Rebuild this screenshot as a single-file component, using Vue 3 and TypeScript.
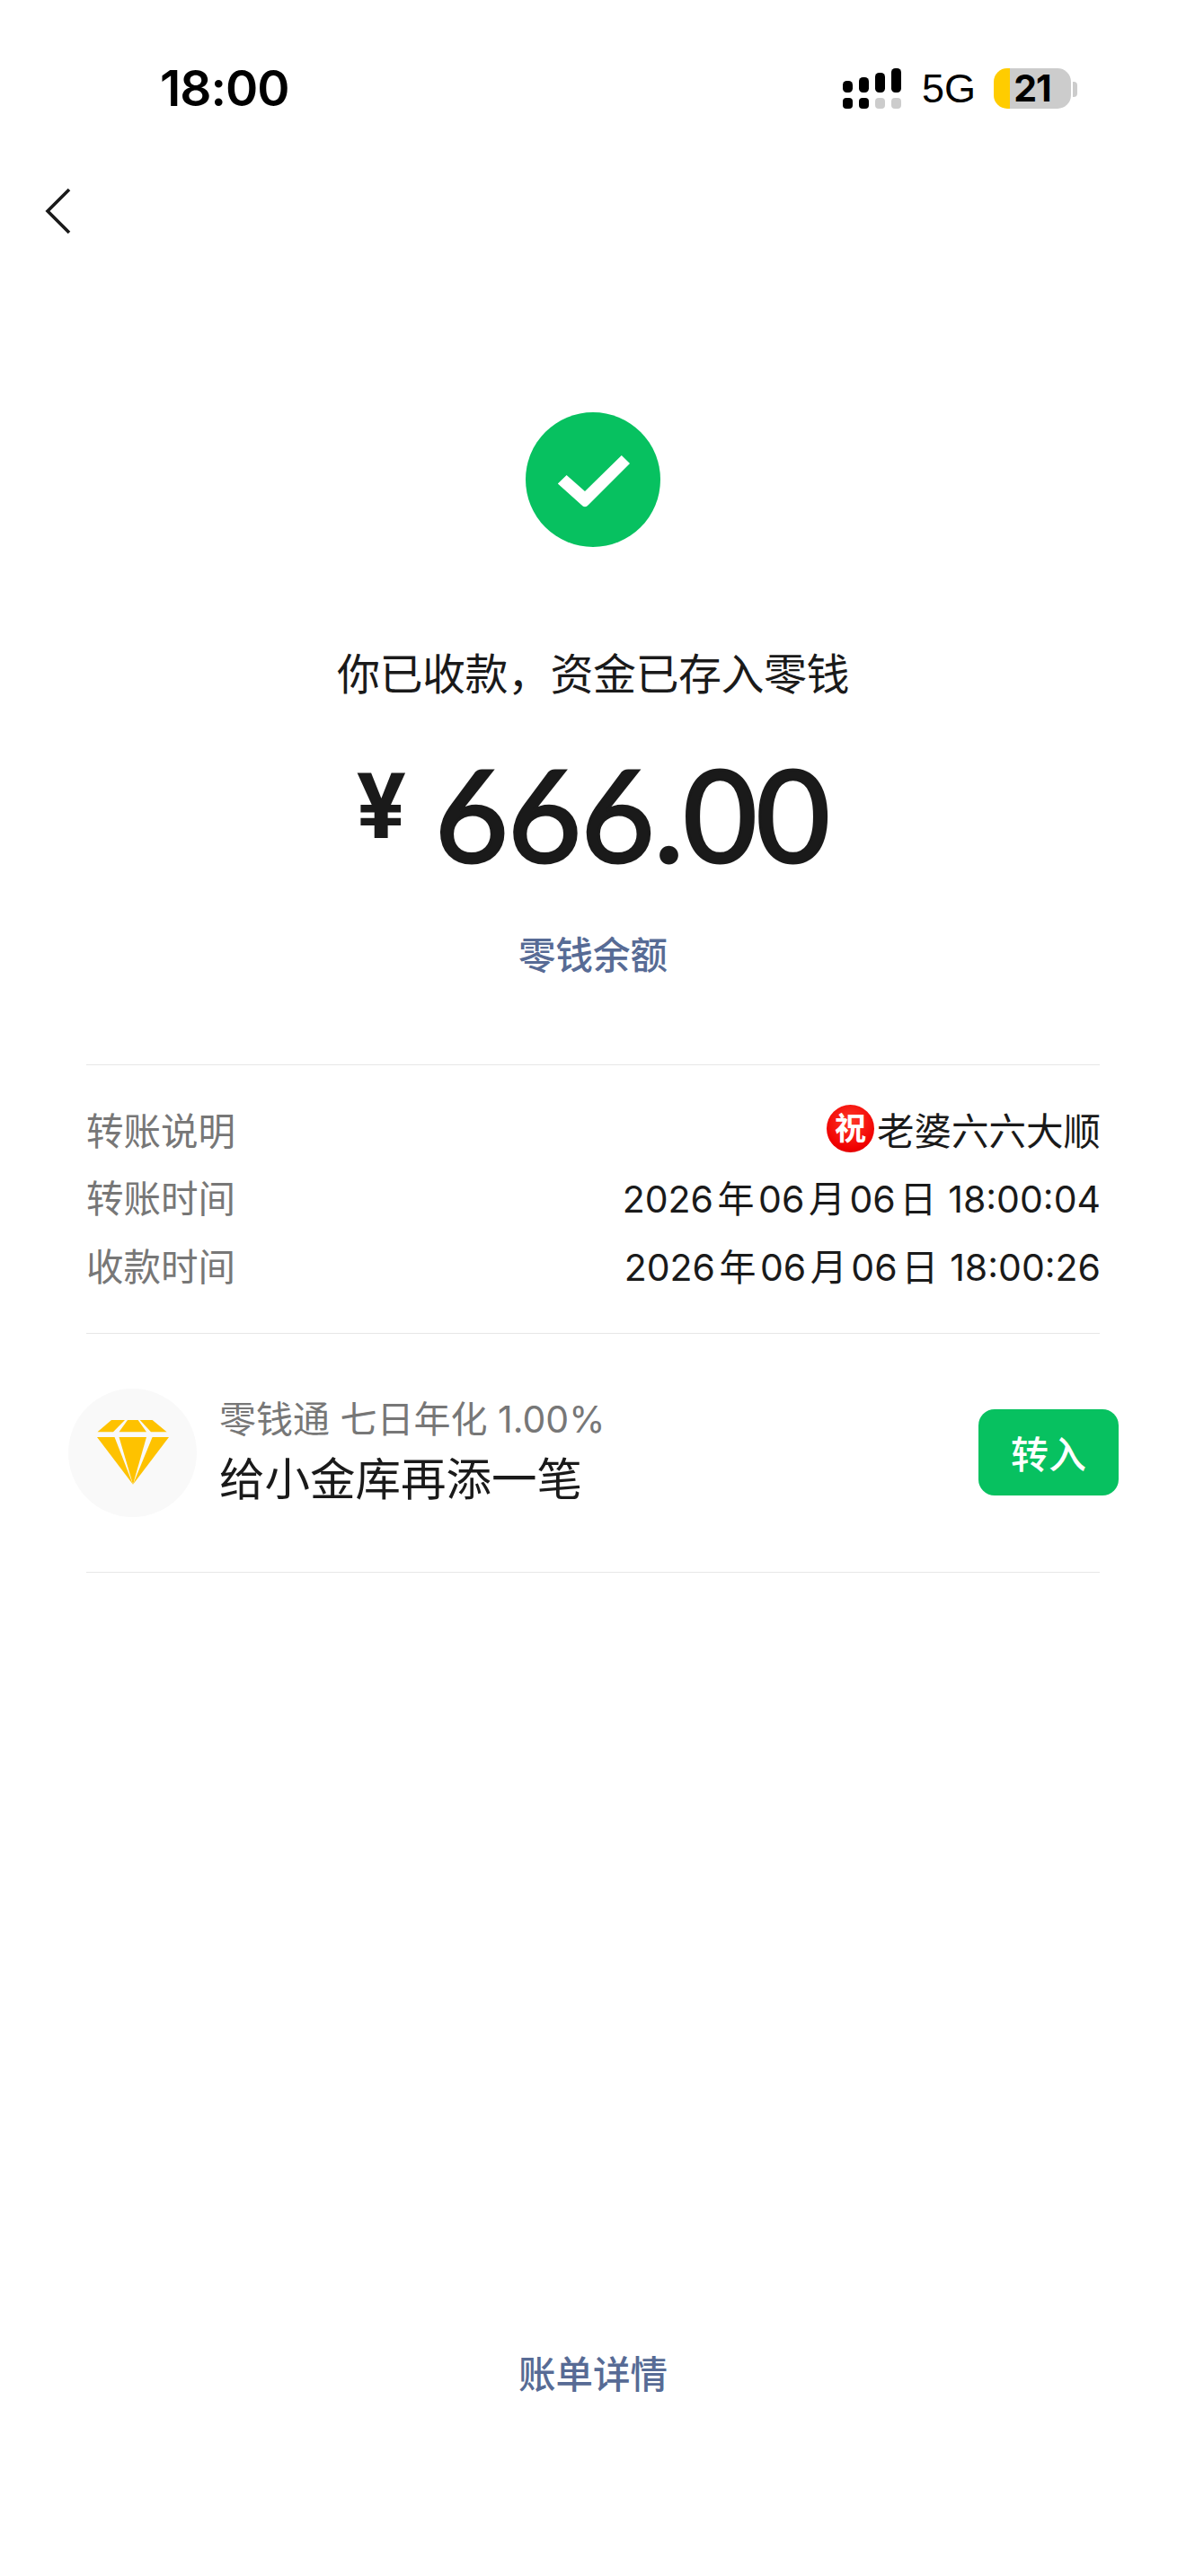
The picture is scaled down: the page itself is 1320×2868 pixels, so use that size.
<script setup lang="ts">
const infoRows = [
  { label: '转账时间', date: '2026 年 06 月 06 日', time: '18:00:04' },
  { label: '收款时间', date: '2026 年 06 月 06 日', time: '18:00:26' },
];

const signalBars = [
  { x: 0, y: 14, h: 13 },
  { x: 18, y: 10, h: 17 },
  { x: 36, y: 5, h: 22 },
  { x: 54, y: 0, h: 27 },
];
</script>

<template>
  <div class="page">
    <header class="status-bar">
      <span class="clock">18:00</span>
      <div class="status-right">
        <svg class="signal" width="65" height="45" viewBox="0 0 65 45">
          <rect v-for="b in signalBars" :key="b.x" :x="b.x" :y="b.y" width="11" :height="b.h" rx="4.5" fill="#000" />
          <rect x="0" y="33" width="11" height="12" rx="4" fill="#000" />
          <rect x="18" y="33" width="11" height="12" rx="4" fill="#000" />
          <rect x="36" y="33" width="11" height="12" rx="4" fill="#ccc" />
          <rect x="54" y="33" width="11" height="12" rx="4" fill="#ccc" />
        </svg>
        <span class="network">5G</span>
        <div class="battery">
          <span class="battery-level">21</span>
          <i class="battery-nub"></i>
        </div>
      </div>
    </header>

    <nav class="nav">
      <svg width="30" height="52" viewBox="0 0 30 52" fill="none">
        <path d="M27 2 3 26l24 24" stroke="#1a1a1a" stroke-width="3.6" />
      </svg>
    </nav>

    <section class="result">
      <svg class="check" width="150" height="150" viewBox="0 0 150 150">
        <circle cx="75" cy="75" r="75" fill="#07c160" />
        <path d="M35.800 79.600 45.600 70 66 88 106.800 48 116 57 70 103Q66 107.500 62 103z" fill="#fff" />
      </svg>
      <h1 class="headline">你已收款，资金已存入零钱</h1>
      <div class="amount"><span class="yen">¥</span><span class="digits">666.00</span></div>
      <a class="link balance">零钱余额</a>
    </section>

    <section class="info">
      <div class="info-row">
        <span class="info-label">转账说明</span>
        <span class="info-value"><i class="bless">祝</i>老婆六六大顺</span>
      </div>
      <div v-for="row in infoRows" :key="row.label" class="info-row">
        <span class="info-label">{{ row.label }}</span>
        <span class="info-value date"><span>{{ row.date }}</span><span class="time">{{ row.time }}</span></span>
      </div>
    </section>

    <section class="promo">
      <div class="promo-row">
        <div class="promo-icon">
          <svg width="82" height="72" viewBox="106 1585 82 72">
            <g fill="#fec200">
              <path d="M107.500 1598.300 123 1585h15l-13 13.300z" />
              <path d="M131.500 1598.300 141 1585h11.600l9.400 13.300z" />
              <path d="M154.700 1585h13.900l16 13.300H167z" />
              <path d="M107 1604h19.500l20.500 52.700z" />
              <path d="M131.500 1604H162l-15 52.700z" />
              <path d="M168.600 1604H187l-40 52.700z" />
            </g>
          </svg>
        </div>
        <div class="promo-text">
          <div class="promo-sub">零钱通 七日年化 1.00%</div>
          <div class="promo-title">给小金库再添一笔</div>
        </div>
        <button class="promo-btn">转入</button>
      </div>
    </section>

    <footer class="footer">
      <a class="link">账单详情</a>
    </footer>
  </div>
</template>

<style>
html,
body {
  margin: 0;
  background: #fff;
}
</style>

<style scoped>
.page {
  width: 1320px;
  height: 2868px;
  overflow: hidden;
  background: #fff;
  color: #1a1a1a;
  font-family: Inter, "Noto Sans CJK SC", sans-serif;
}
.status-bar {
  height: 196px;
  padding: 0 121px 0 178px;
  display: flex;
  align-items: center;
  justify-content: space-between;
  color: #000;
}
.clock {
  font-size: 55px;
  font-weight: 600;
  letter-spacing: -1px;
}
.status-right {
  display: flex;
  align-items: center;
}
.signal {
  display: block;
  margin-right: 23px;
}
.network {
  font-family: "Liberation Sans", sans-serif;
  font-size: 45px;
  line-height: 45px;
  margin-right: 20px;
}
.battery {
  position: relative;
  width: 86px;
  height: 45px;
  border-radius: 15px;
  background: linear-gradient(90deg, #ffcc00 18px, #ccc 18px);
  text-align: center;
  margin-right: 7px;
}
.battery-level {
  display: block;
  font-size: 41px;
  line-height: 45px;
  font-weight: 700;
  letter-spacing: -1px;
}
.battery-nub {
  position: absolute;
  right: -7px;
  top: 15px;
  width: 5px;
  height: 17px;
  border-radius: 0 4px 4px 0;
  background: #ccc;
}
.nav {
  height: 52px;
  margin-top: 13px;
  padding-left: 50px;
}
.nav svg {
  display: block;
}
.result {
  display: flex;
  flex-direction: column;
  align-items: center;
  margin-top: 198px;
}
.check {
  display: block;
}
.headline {
  margin: 110px 0 0;
  font-size: 48px;
  line-height: 64px;
  font-weight: 400;
  letter-spacing: -0.5px;
}
.amount {
  margin-top: 57px;
  height: 130px;
  display: flex;
  align-items: center;
  line-height: 130px;
  font-family: Lato, sans-serif;
}
.yen {
  font-family: Roboto, sans-serif;
  font-size: 102px;
  font-weight: 700;
  margin-right: 32px;
  position: relative;
  top: -7px;
}
.digits {
  font-size: 142px;
  font-weight: 400;
  letter-spacing: -1px;
  -webkit-text-stroke: 3px #1a1a1a;
}
.link {
  color: #576b95;
  font-size: 41.5px;
  line-height: 56px;
  font-weight: 500;
}
.balance {
  margin-top: 66px;
}
.info {
  margin: 93px 96px 0;
  padding: 33px 0 38px;
  border-top: 1px solid #e7e7e7;
  border-bottom: 1px solid #e7e7e7;
}
.info-row {
  height: 75.5px;
  display: flex;
  align-items: center;
  justify-content: space-between;
  font-size: 41.5px;
}
.info-label {
  color: #777;
}
.info-value {
  display: flex;
  align-items: center;
  margin-right: -1px;
}
.date {
  align-items: baseline;
  font-size: 41px;
  word-spacing: -7px;
}
.time {
  margin-left: 13px;
}
.bless {
  width: 53px;
  height: 53px;
  margin-right: 3px;
  border-radius: 50%;
  background: radial-gradient(circle at 50% 35%, #ff3a2a, #f00000 70%, #c40000);
  color: #fff;
  font-size: 35px;
  font-style: normal;
  font-weight: 700;
  line-height: 53px;
  text-align: center;
}
.promo {
  margin: 0 96px;
  height: 265px;
  border-bottom: 1px solid #e7e7e7;
  display: flex;
  align-items: center;
}
.promo-row {
  flex: 1;
  margin: 0 -21px 0 -20px;
  display: flex;
  align-items: center;
}
.promo-icon {
  width: 143px;
  height: 143px;
  border-radius: 50%;
  background: #f9f9f9;
  display: flex;
  align-items: center;
  justify-content: center;
  margin-right: 25px;
}
.promo-icon svg {
  display: block;
}
.promo-sub {
  color: #777;
  font-size: 41px;
  line-height: 56px;
}
.promo-title {
  font-size: 50.5px;
  line-height: 70px;
  margin-top: 4px;
}
.promo-btn {
  margin-left: auto;
  width: 156px;
  height: 96px;
  border: 0;
  border-radius: 18px;
  background: #07c160;
  color: #fff;
  font-family: inherit;
  font-size: 42px;
  font-weight: 500;
  padding: 0 0 2px;
}
.footer {
  margin-top: 865px;
  text-align: center;
}
</style>
